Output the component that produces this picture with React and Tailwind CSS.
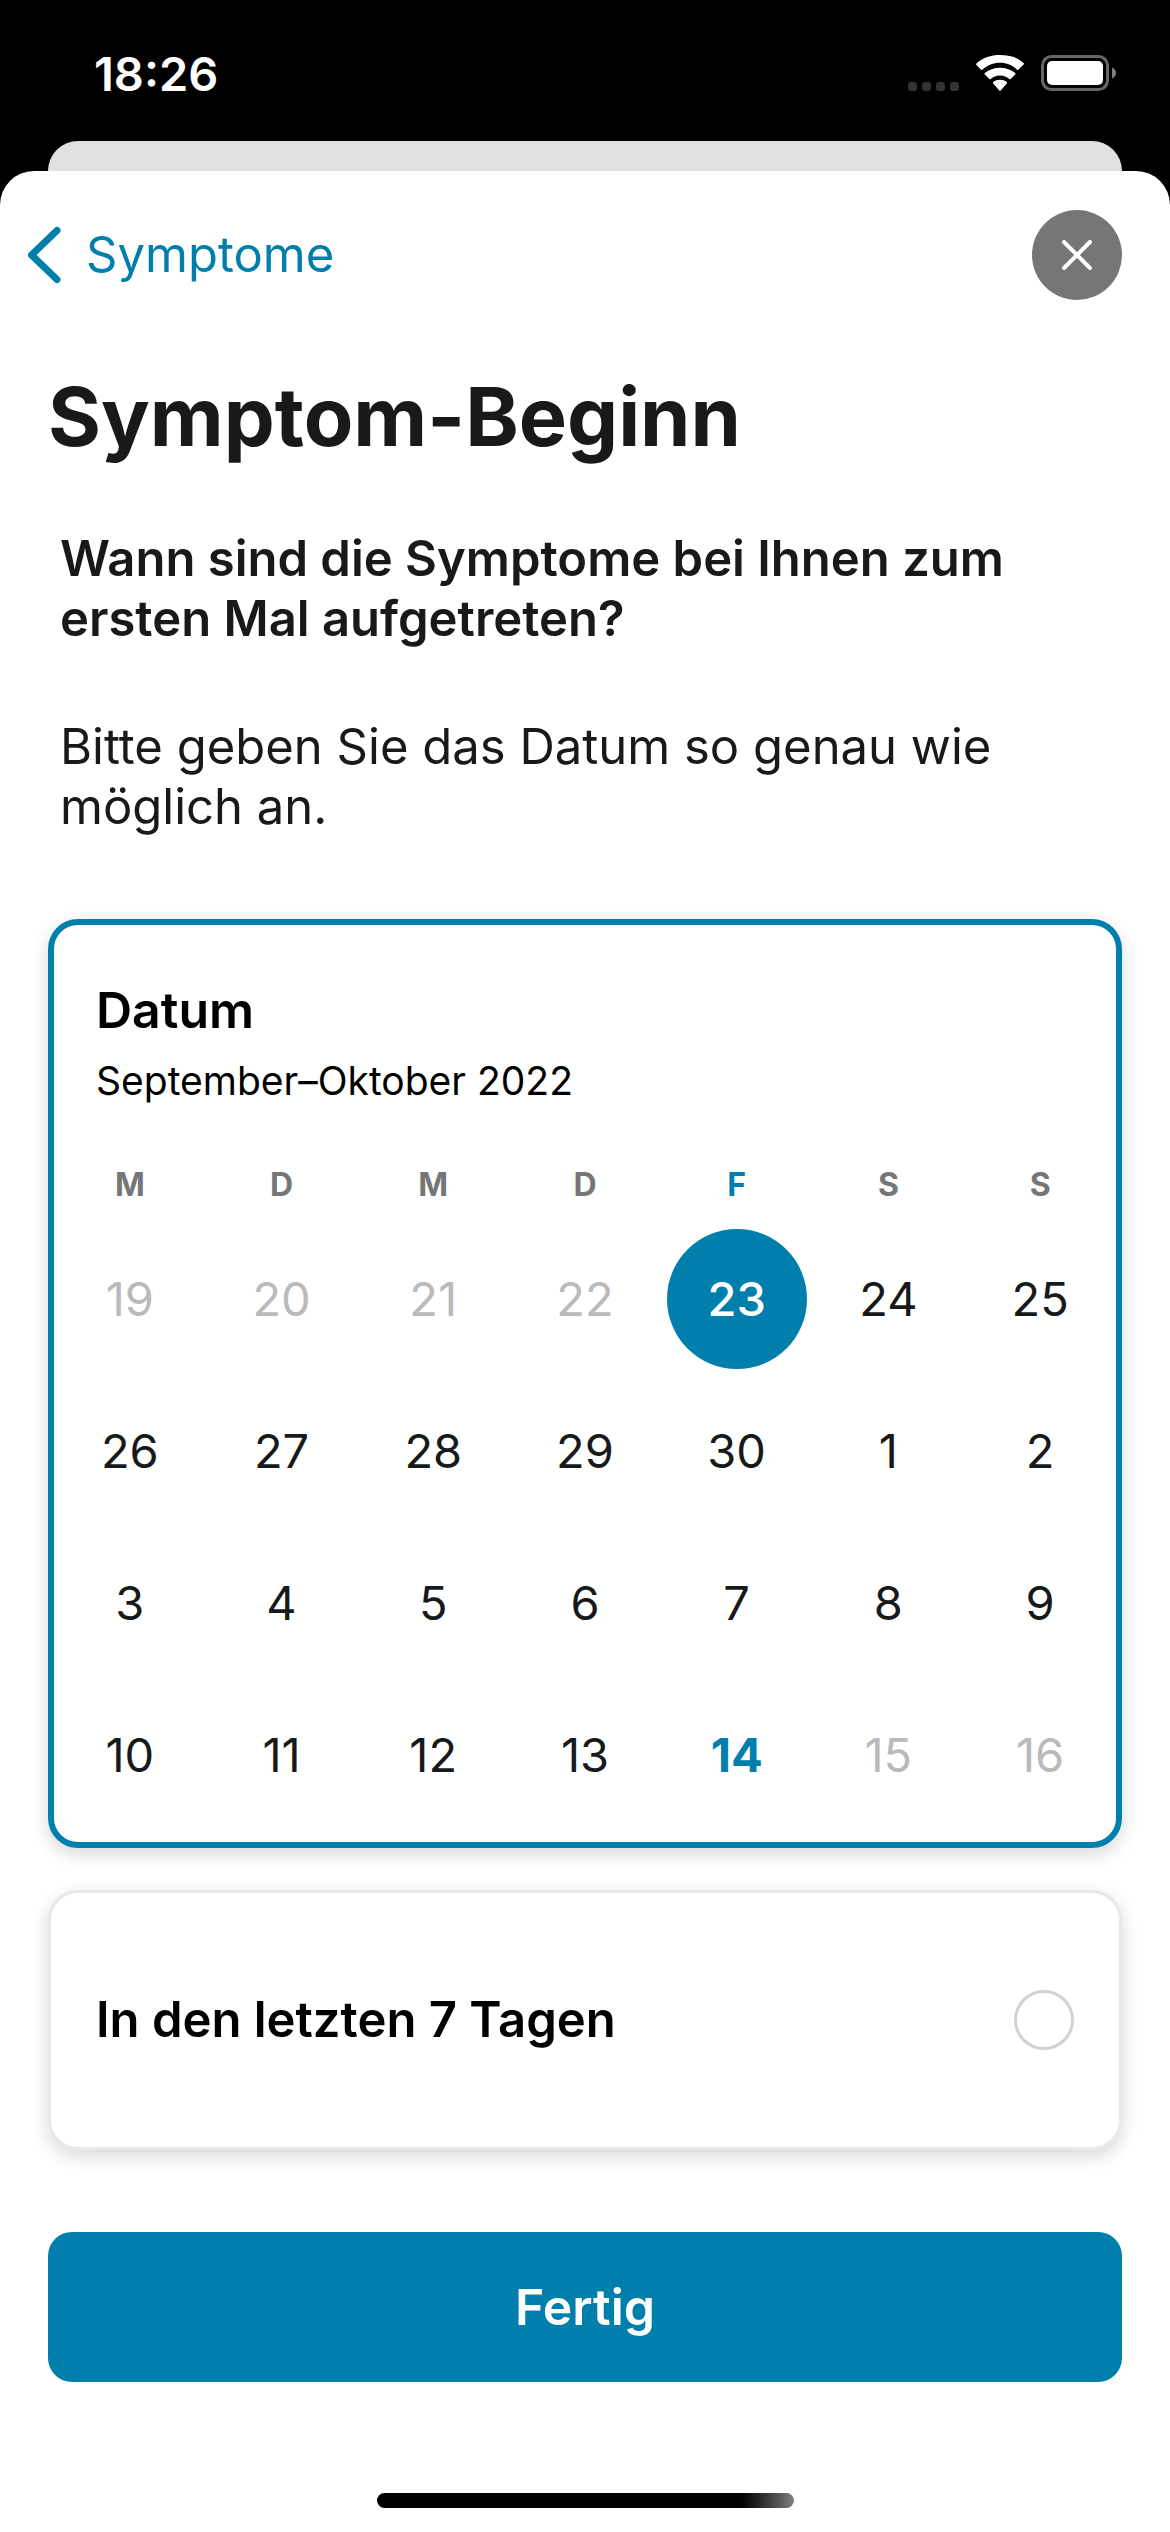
import React, { useState } from "react";

const WEEKDAYS = ["M", "D", "M", "D", "F", "S", "S"];

const WEEKS = [
  [19, 20, 21, 22, 23, 24, 25],
  [26, 27, 28, 29, 30, 1, 2],
  [3, 4, 5, 6, 7, 8, 9],
  [10, 11, 12, 13, 14, 15, 16],
];

const DISABLED = ["0-19", "0-20", "0-21", "0-22", "3-15", "3-16"];
const TODAY = "3-14";

function StatusBar() {
  return (
    <div className="flex h-[141px] items-start justify-between pt-[46px] pr-[54px] pl-[94px] text-white">
      <span className="text-[47px] leading-[56px] font-semibold">18:26</span>
      <div className="flex items-center pt-[9px]">
        <div className="mr-[17px] flex gap-[5px] self-end">
          <span className="size-[9px] rounded-[3px] bg-[#333333]" />
          <span className="size-[9px] rounded-[3px] bg-[#333333]" />
          <span className="size-[9px] rounded-[3px] bg-[#333333]" />
          <span className="size-[9px] rounded-[3px] bg-[#333333]" />
        </div>
        <svg className="mr-[17px] h-9 w-12" viewBox="0 0 48 36" fill="#fff" aria-hidden="true">
          <path d="M24 7.8c6.6 0 12.6 2.6 17 6.9.4.4.9.4 1.3 0l5.3-5.3c.4-.4.4-1 0-1.4C41.4 2 33.1 0 24 0S6.6 2.6.4 8.6c-.4.4-.4 1 0 1.4l4.700 4.700c.4.4.9.4 1.300 0C11.400 10.400 17.400 7.800 24 7.800Z" />
          <path d="M24 20.500c3.500 0 6.800 1.300 9.300 3.500.4.4 1 .4 1.400 0l4.500-4.600c.4-.4.4-1 0-1.400C35.100 14.700 29.800 12.700 24 12.700S12.900 14.700 8.800 18c-.4.4-.4 1 0 1.400l4.500 4.600c.4.4 1 .4 1.400 0 2.500-2.200 5.800-3.500 9.300-3.500Z" />
          <path d="M30.800 28.400c.4-.4.4-1 0-1.400-1.900-1.500-4.200-2.300-6.800-2.300s-4.900.8-6.800 2.300c-.4.4-.4 1 0 1.400l6.100 7c.4.5 1 .5 1.400 0Z" />
        </svg>
        <svg className="h-9 w-[75px]" viewBox="0 0 75 36" aria-hidden="true">
          <rect x="1.500" y="1.500" width="65" height="33" rx="9" fill="none" stroke="#666" strokeWidth="3" />
          <rect x="6" y="6" width="56" height="24" rx="5" fill="#fff" />
          <path d="M71 12.500c2.600 1 4 3 4 5.500s-1.400 4.500-4 5.500Z" fill="#808080" />
        </svg>
      </div>
    </div>
  );
}

function dayClass(id, selected) {
  const base = "inline-flex size-[140px] items-center justify-center rounded-full ";
  if (id === selected) return base + "bg-[#007fad] font-medium text-white";
  if (id === TODAY) return base + "font-bold text-[#007fad]";
  if (DISABLED.includes(id)) return base + "text-[#b9baba]";
  return base + "text-[#17191a]";
}

function Calendar() {
  const [selected, setSelected] = useState("0-23");
  return (
    <section
      aria-labelledby="date-title"
      className="mt-[82px] rounded-[30px] border-[6px] border-[#007fad] pt-[55px] pb-[11px] shadow-[0_6px_18px_rgba(0,0,0,0.16)]"
    >
      <h2 id="date-title" className="px-[42px] text-[50px] leading-[60px] font-semibold text-black">
        Datum
      </h2>
      <p className="mt-[17px] px-[42px] text-[39px] leading-[48px] text-black">September–Oktober 2022</p>
      <table className="mt-[60px] w-full table-fixed border-collapse text-center">
        <thead>
          <tr>
            {WEEKDAYS.map((day, i) => (
              <th
                key={i}
                scope="col"
                className={
                  i === 4
                    ? "p-0 pb-[18px] text-[32px] leading-[40px] font-bold text-[#007fad]"
                    : "p-0 pb-[18px] text-[32px] leading-[40px] font-bold text-[#747678]"
                }
              >
                {day}
              </th>
            ))}
          </tr>
        </thead>
        <tbody className="text-[47px] leading-[60px]">
          {WEEKS.map((week, w) => (
            <tr key={w} className="h-[152px]">
              {week.map((day) => {
                const id = `${w}-${day}`;
                return (
                  <td key={day} className="p-0 align-middle">
                    <div className="flex justify-center">
                      <button
                        type="button"
                        disabled={DISABLED.includes(id)}
                        aria-pressed={id === selected}
                        onClick={() => setSelected(id)}
                        className={dayClass(id, selected)}
                      >
                        {day}
                      </button>
                    </div>
                  </td>
                );
              })}
            </tr>
          ))}
        </tbody>
      </table>
    </section>
  );
}

export default function App() {
  return (
    <div className="flex min-h-screen flex-col bg-black font-['Inter','Liberation_Sans',sans-serif]">
      <StatusBar />
      <div className="mx-12 h-[60px] rounded-t-[30px] bg-[#e0e0e0]" />
      <main className="-mt-[30px] flex grow flex-col rounded-t-[34px] bg-white px-12 pt-[39px] pb-6 text-[#17191a]">
        <nav className="flex items-center justify-between">
          <a href="#symptome" className="-ml-5 flex items-center gap-6 text-[49px] leading-[60px] text-[#007fad]">
            <svg className="h-[58px] w-[34px]" viewBox="0 0 34 58" fill="none" stroke="currentColor" strokeWidth="7" strokeLinecap="round" strokeLinejoin="round" aria-hidden="true">
              <path d="M29 4.500 3.500 29 29 53.500" />
            </svg>
            Symptome
          </a>
          <button type="button" aria-label="Schließen" className="flex size-[90px] items-center justify-center rounded-full bg-[#747678] text-white">
            <svg className="size-[30px]" viewBox="0 0 30 30" fill="none" stroke="currentColor" strokeWidth="4" strokeLinecap="round" aria-hidden="true">
              <path d="m2 2 26 26M28 2 2 28" />
            </svg>
          </button>
        </nav>
        <h1 className="mt-[69px] text-[81px] leading-[96px] font-bold">Symptom-Beginn</h1>
        <p className="mt-16 px-3 text-[49px] leading-[60px] font-semibold">
          Wann sind die Symptome bei Ihnen zum ersten Mal aufgetreten?
        </p>
        <p className="mt-[68px] px-3 text-[49px] leading-[60px]">
          Bitte geben Sie das Datum so genau wie möglich an.
        </p>
        <Calendar />
        <label className="mt-[42px] flex items-center justify-between rounded-[30px] border-[3px] border-[#e8e8e8] px-[45px] py-[97px] shadow-[0_6px_18px_rgba(0,0,0,0.16)]">
          <span className="text-[49px] leading-[60px] font-semibold text-black">In den letzten 7 Tagen</span>
          <input
            type="radio"
            name="zeitraum"
            className="size-[60px] appearance-none rounded-full border-[3px] border-[#d1d1d1] checked:border-[16px] checked:border-[#007fad]"
          />
        </label>
        <button type="button" className="mt-[82px] rounded-3xl bg-[#007fad] py-[45px] text-[50px] leading-[60px] font-semibold text-white">
          Fertig
        </button>
        <div className="mx-auto mt-auto h-[15px] w-[417px] rounded-full bg-linear-to-r from-black from-85% to-[#808080]" />
      </main>
    </div>
  );
}
